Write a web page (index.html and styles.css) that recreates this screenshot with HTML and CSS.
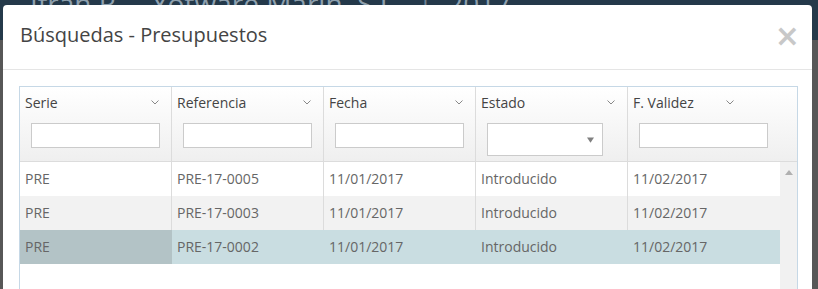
FILE: index.html
```html
<!DOCTYPE html>
<html lang="es">
<head>
<meta charset="utf-8">
<title>Búsquedas - Presupuestos</title>
<link rel="stylesheet" href="styles.css">
</head>
<body>
<div class="page">
  <div class="navbar">
    <span class="nav-user">Ifran R</span>
    <span class="nav-company">Yotware Marin, S.L.</span>
    <span class="nav-sep">|</span>
    <span class="nav-year">2017</span>
  </div>
</div>
<div class="modal">
  <div class="modal-header">
    <h4 class="modal-title">Búsquedas - Presupuestos</h4>
    <span class="close">×</span>
  </div>
  <div class="modal-body">
    <div class="grid">
      <div class="grid-head">
        <div class="hcell">
          <div class="hlabel"><span>Serie</span><svg class="chev" viewBox="0 0 8 5"><path d="M0.5 0.5 L4 4 L7.5 0.5" /></svg></div>
          <div class="filter"><span class="input"></span></div>
        </div>
        <div class="hcell">
          <div class="hlabel"><span>Referencia</span><svg class="chev" viewBox="0 0 8 5"><path d="M0.5 0.5 L4 4 L7.5 0.5" /></svg></div>
          <div class="filter"><span class="input"></span></div>
        </div>
        <div class="hcell">
          <div class="hlabel"><span>Fecha</span><svg class="chev" viewBox="0 0 8 5"><path d="M0.5 0.5 L4 4 L7.5 0.5" /></svg></div>
          <div class="filter"><span class="input"></span></div>
        </div>
        <div class="hcell">
          <div class="hlabel"><span>Estado</span><svg class="chev" viewBox="0 0 8 5"><path d="M0.5 0.5 L4 4 L7.5 0.5" /></svg></div>
          <div class="filter"><span class="select"><svg class="caret" viewBox="0 0 8 6"><path d="M0 0 H8 L4 6 Z" /></svg></span></div>
        </div>
        <div class="hcell last">
          <div class="hlabel"><span>F. Validez</span><svg class="chev" viewBox="0 0 8 5"><path d="M0.5 0.5 L4 4 L7.5 0.5" /></svg></div>
          <div class="filter"><span class="input"></span></div>
        </div>
      </div>
      <div class="grid-body">
        <div class="rows">
          <div class="row">
            <div class="cell">PRE</div>
            <div class="cell">PRE-17-0005</div>
            <div class="cell">11/01/2017</div>
            <div class="cell">Introducido</div>
            <div class="cell">11/02/2017</div>
          </div>
          <div class="row alt">
            <div class="cell">PRE</div>
            <div class="cell">PRE-17-0003</div>
            <div class="cell">11/01/2017</div>
            <div class="cell">Introducido</div>
            <div class="cell">11/02/2017</div>
          </div>
          <div class="row selected">
            <div class="cell active">PRE</div>
            <div class="cell">PRE-17-0002</div>
            <div class="cell">11/01/2017</div>
            <div class="cell">Introducido</div>
            <div class="cell">11/02/2017</div>
          </div>
        </div>
        <div class="scrollbar">
          <svg class="up" viewBox="0 0 8 5"><path d="M0 5 L4 0 L8 5 Z" /></svg>
        </div>
      </div>
    </div>
  </div>
</div>
</body>
</html>
```
FILE: styles.css
```css
* { box-sizing: border-box; }
html, body { margin: 0; padding: 0; }
body {
  width: 818px;
  height: 289px;
  overflow: hidden;
  background: #575757;
  font-family: "Open Sans", "Noto Sans", sans-serif;
  position: relative;
}
.page { height: 289px; }
.navbar {
  height: 40px;
  background: #24394a;
  display: flex;
  align-items: flex-end;
  padding: 0 0 23px 0;
  font-size: 28px;
  color: #8ea0ae;
  line-height: 1;
  white-space: nowrap;
}
.nav-user { margin-left: 30px; }
.nav-company { margin-left: 36px; }
.nav-sep { margin-left: 16px; color: #6f8190; }
.nav-year { margin-left: 14px; }
.modal {
  position: absolute;
  left: 3px;
  top: 5px;
  width: 809px;
  height: 284px;
  overflow: hidden;
  background: #fff;
  border-radius: 4px 4px 0 0;
}
.modal-header {
  height: 65px;
  border-bottom: 1px solid #e5e5e5;
  display: flex;
  align-items: center;
  justify-content: space-between;
  padding: 0 12px 0 17px;
}
.modal-title {
  margin: 0;
  font-size: 20px;
  font-weight: 400;
  color: #444;
  line-height: 28px;
  padding-bottom: 4px;
}
.close {
  font-family: "DejaVu Sans", sans-serif;
  font-size: 30px;
  font-weight: 700;
  line-height: 1;
  color: #c8c8c8;
  padding-bottom: 2px;
}
.modal-body { padding: 16px 15px 0 16px; }
.grid {
  width: 779px;
  border: 1px solid #c6d8e6;
  border-bottom: none;
  height: 203px;
  display: flex;
  flex-direction: column;
}
.grid-head {
  display: flex;
  height: 75px;
  background: linear-gradient(#ffffff, #efefef);
  border-bottom: 1px solid #dcdcdc;
}
.hcell {
  width: 152px;
  border-right: 1px solid #dcdcdc;
  display: flex;
  flex-direction: column;
}
.hcell.last {
  flex: 1;
  border-right: none;
}
.hcell.last .hlabel { width: 118px; }
.hlabel {
  display: flex;
  justify-content: space-between;
  align-items: flex-start;
  padding: 6px 12px 0 5px;
  font-size: 14px;
  line-height: 20px;
  color: #444;
  height: 30px;
}
.chev {
  width: 8px;
  height: 5px;
  margin-top: 7px;
  fill: none;
  stroke: #888;
  stroke-width: 1;
}
.filter {
  padding: 6px 0 0 11px;
}
.input {
  display: block;
  width: 129px;
  height: 25px;
  background: #fff;
  border: 1px solid #cbcbcb;
}
.select {
  display: flex;
  justify-content: flex-end;
  align-items: center;
  width: 116px;
  height: 33px;
  background: #fff;
  border: 1px solid #cbcbcb;
  padding-right: 8px;
}
.caret { width: 7px; height: 6px; fill: #808080; }
.grid-body {
  flex: 1;
  display: flex;
}
.rows { width: 760px; }
.row {
  display: flex;
  height: 34px;
  background: #fff;
}
.row.alt { background: #f2f2f2; }
.row.selected { background: #c9dde1; }
.cell {
  width: 152px;
  padding: 0 5px;
  font-size: 14px;
  line-height: 34px;
  color: #666;
  border-right: 1px solid #dcdcdc;
}
.row .cell:last-child { border-right: none; }
.row.selected .cell { border-right-color: transparent; }
.cell.active { background: #b3c3c6; }
.scrollbar {
  flex: 1;
  background: #f1f1f1;
  display: flex;
  justify-content: center;
  padding-top: 8px;
}
.up { width: 8px; height: 5px; fill: #b0b0b0; }
```
